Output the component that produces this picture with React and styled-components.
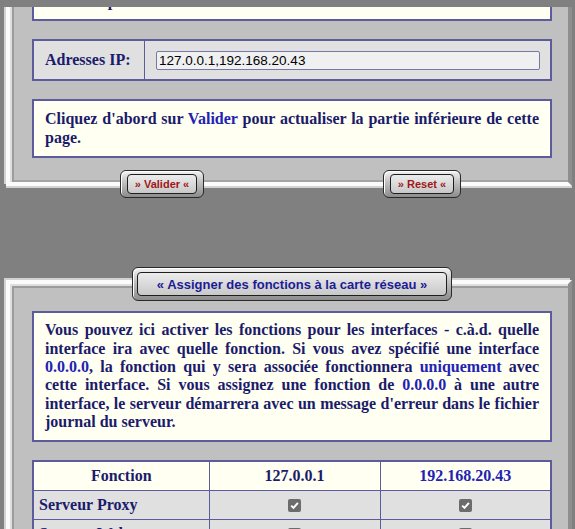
import React from "react";
import styled, { createGlobalStyle } from "styled-components";

const GlobalStyle = createGlobalStyle`
    html, body {
        margin: 0;
        padding: 0;
        background: #808080;
        overflow: hidden;
    }
`;

const Page = styled.div`
    padding: 0 3px 60px 6px;
    font-family: "Liberation Serif", "Times New Roman", serif;
    color: #1b1b6b;
`;

const TopShade = styled.div`
    position: fixed;
    top: 0;
    left: 0;
    right: 0;
    height: 7px;
    background: #808080;
    z-index: 10;
`;

const Frame = styled.div`
    position: relative;
    margin-top: ${(p) => p.$overlap}px;
    display: flex;
    flex-direction: column;
    gap: 18px;
    padding: ${(p) => p.$padTop}px 16px 24px 22px;
    background: #c0c0c0;
    border-style: solid;
    border-width: 4px;
    border-color: #fbfbfb #8e8e8e #fbfbfb #fbfbfb;
    box-shadow: -2px -2px 0 #d2d2d2, 0 2px 0 #d2d2d2, inset 2px 2px 0 #dedede,
        inset 4px 4px 0 #9c9c9c, inset 0 -2px 0 #a4a4a4;
`;

const NoteBox = styled.div`
    background: #fffff2;
    border: 2px solid #5c5c9c;
    padding: ${(p) => p.$pad || 9}px 11px;
    font-size: 16px;
    font-weight: bold;
    line-height: 1.15;
    text-align: justify;
`;

const Hl = styled.span`
    color: #2222b4;
`;

const FieldRow = styled.div`
    display: grid;
    grid-template-columns: 111px 1fr;
    height: 42px;
    box-sizing: border-box;
    border: 2px solid #5c5c9c;
    background: #e0e0e0;
`;

const FieldLabel = styled.div`
    display: flex;
    align-items: center;
    padding-left: 11px;
    border-right: 1px solid #5c5c9c;
    font-size: 16px;
    font-weight: bold;
`;

const FieldCell = styled.div`
    display: flex;
    align-items: center;
    padding: 0 10px 0 11px;
`;

const TextInput = styled.input`
    flex: 1;
    height: 19px;
    box-sizing: border-box;
    margin: 0;
    padding: 0 2px;
    border: 1px solid #7878a8;
    border-radius: 2px;
    background: #f0f0f0;
    font-family: "Liberation Sans", Arial, sans-serif;
    font-size: 13.5px;
    color: #000;
    outline: none;
`;

const ButtonRow = styled.div`
    position: relative;
    z-index: 2;
    display: grid;
    grid-template-columns: ${(p) => (p.$single ? "1fr" : "1fr 1fr")};
    justify-items: center;
    margin: ${(p) => p.$top}px 20px 0 26px;
`;

const Metal = styled.div`
    display: inline-flex;
    padding: ${(p) => (p.$big ? "4px" : "3px 6px")};
    border: 1px solid #2a2a2a;
    border-radius: 6px;
    background: linear-gradient(#f4f4f4, #c4c4c4 40%, #8c8c8c);
    box-shadow: inset 1px 1px 0 #ffffff;
`;

const MetalFace = styled.div`
    display: flex;
    align-items: center;
    height: ${(p) => (p.$big ? 24 : 20)}px;
    box-sizing: border-box;
    padding: 0 ${(p) => (p.$big ? 19 : 7)}px;
    border: 1px solid #1e1e1e;
    border-radius: 4px;
    background: linear-gradient(#ececec, #c8c8c8);
    font-family: "Liberation Sans", Arial, sans-serif;
    font-size: ${(p) => (p.$big ? 13 : 11)}px;
    font-weight: bold;
    color: ${(p) => p.$tone};
    white-space: nowrap;
`;

const FuncTable = styled.table`
    width: 100%;
    border-collapse: collapse;
    border: 2px solid #5c5c9c;
    font-size: 16px;
    font-weight: bold;
`;

const HeadCell = styled.th`
    height: 28px;
    padding: 0;
    border: 1px solid #5c5c9c;
    background: #fffff2;
    text-align: center;
    color: ${(p) => p.$tone || "#1b1b6b"};
`;

const Cell = styled.td`
    height: 28px;
    padding: 0 5px;
    border: 1px solid #5c5c9c;
    background: #e0e0e0;
    text-align: ${(p) => (p.$center ? "center" : "left")};
    vertical-align: middle;
`;

const Check = styled.span`
    display: inline-flex;
    align-items: center;
    justify-content: center;
    width: 13px;
    height: 13px;
    border-radius: 2px;
    background: #6c6c6c;
    vertical-align: middle;
`;

function Tick() {
    return (
        <Check>
            <svg width="11" height="11" viewBox="0 0 11 11">
                <path d="M2.2 5.6 L4.5 7.9 L8.9 2.9" fill="none" stroke="#fff" strokeWidth="2" />
            </svg>
        </Check>
    );
}

function MetalButton({ children, tone, big }) {
    return (
        <Metal $big={big}>
            <MetalFace $big={big} $tone={tone}>
                {children}
            </MetalFace>
        </Metal>
    );
}

const rows = [
    { name: "Serveur Proxy", a: true, b: true },
    { name: "Serveur Web", a: true, b: true },
];

export default function App() {
    return (
        <>
            <GlobalStyle />
            <Page>
                <TopShade />

                <Frame $overlap={-45} $padTop={22}>
                    <NoteBox>Saisissez plusieurs adresses IP.</NoteBox>

                    <FieldRow>
                        <FieldLabel>Adresses IP:</FieldLabel>
                        <FieldCell>
                            <TextInput readOnly value="127.0.0.1,192.168.20.43" />
                        </FieldCell>
                    </FieldRow>

                    <NoteBox>
                        Cliquez d'abord sur <Hl>Valider</Hl> pour actualiser la partie
                        inférieure de cette page.
                    </NoteBox>
                </Frame>

                <ButtonRow $top={-16}>
                    <MetalButton tone="#a01818">» Valider «</MetalButton>
                    <MetalButton tone="#a01818">» Reset «</MetalButton>
                </ButtonRow>

                <ButtonRow $single $top={69}>
                    <MetalButton big tone="#1c1c96">
                        « Assigner des fonctions à la carte réseau »
                    </MetalButton>
                </ButtonRow>

                <Frame $overlap={-21} $padTop={27}>
                    <NoteBox $pad={8}>
                        Vous pouvez ici activer les fonctions pour les interfaces - c.à.d.
                        quelle interface ira avec quelle fonction. Si vous avez spécifié une
                        interface <Hl>0.0.0.0</Hl>, la fonction qui y sera associée
                        fonctionnera <Hl>uniquement</Hl> avec cette interface. Si vous
                        assignez une fonction de <Hl>0.0.0.0</Hl> à une autre interface, le
                        serveur démarrera avec un message d'erreur dans le fichier journal du
                        serveur.
                    </NoteBox>

                    <FuncTable>
                        <colgroup>
                            <col style={{ width: "34%" }} />
                            <col style={{ width: "33%" }} />
                            <col style={{ width: "33%" }} />
                        </colgroup>
                        <thead>
                            <tr>
                                <HeadCell>Fonction</HeadCell>
                                <HeadCell>127.0.0.1</HeadCell>
                                <HeadCell $tone="#2222b4">192.168.20.43</HeadCell>
                            </tr>
                        </thead>
                        <tbody>
                            {rows.map((r) => (
                                <tr key={r.name}>
                                    <Cell>{r.name}</Cell>
                                    <Cell $center>{r.a && <Tick />}</Cell>
                                    <Cell $center>{r.b && <Tick />}</Cell>
                                </tr>
                            ))}
                        </tbody>
                    </FuncTable>
                </Frame>
            </Page>
        </>
    );
}
